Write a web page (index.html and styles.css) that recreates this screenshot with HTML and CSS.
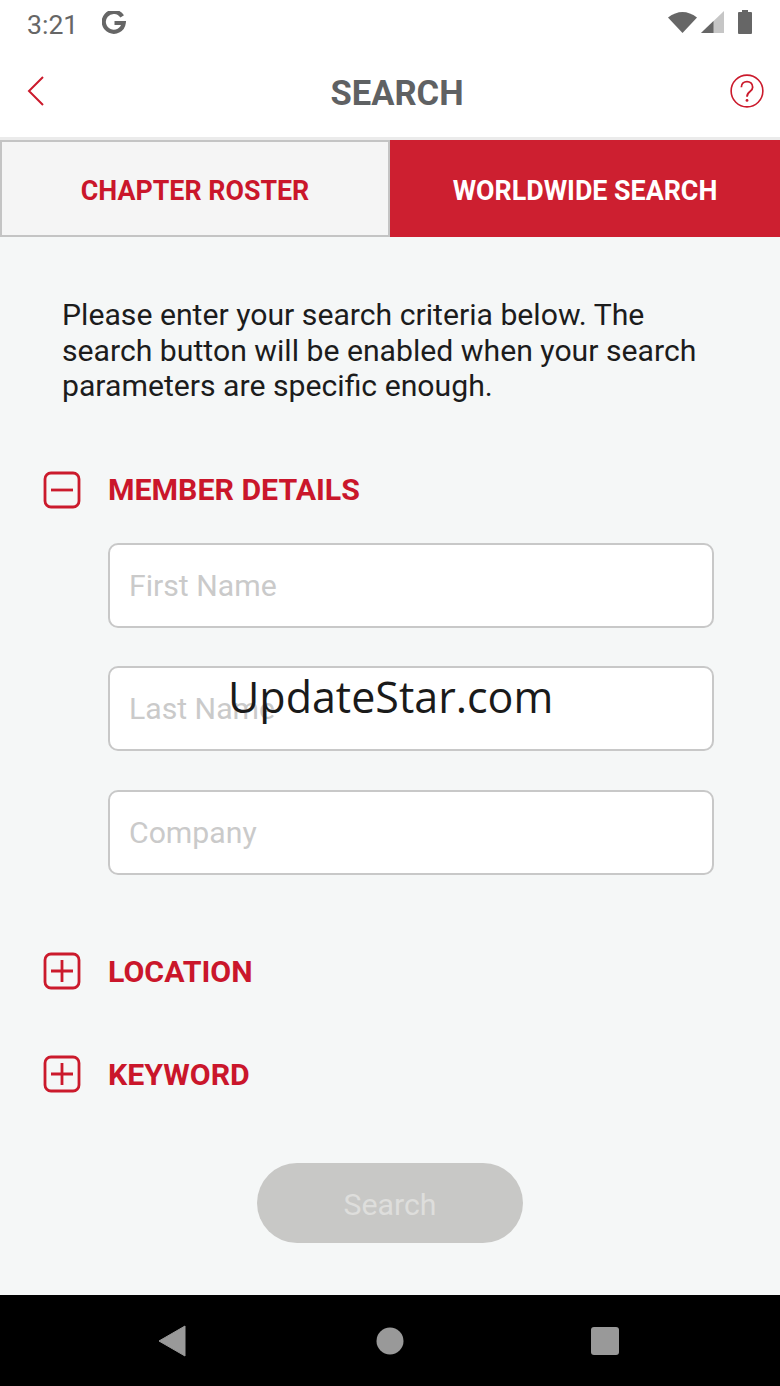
FILE: index.html
```html
<!DOCTYPE html>
<html lang="en">
<head>
    <meta charset="UTF-8">
    <meta name="viewport" content="width=device-width, initial-scale=1.0">
    <title>Search</title>
    <link rel="stylesheet" href="styles.css">
</head>
<body>
    <div class="screen">
        <div class="status-bar">
            <span class="clock">3:21</span>
            <!-- google logo -->
            <svg class="g-mark" width="24" height="24" viewBox="0 0 24 24"><path d="M20.2 5.4 A10 10 0 1 0 21.7 12 H12.5" fill="none" stroke="#666" stroke-width="4.2"/></svg>
            <div class="status-icons">
                <svg width="29" height="22" viewBox="0 0 29 22"><path d="M0 6.5 Q14.5 -4.5 29 6.5 L14.5 22 Z" fill="#666"/></svg>
                <svg class="signal" width="23" height="22" viewBox="0 0 23 22"><path d="M0 22 L23 0 V22 Z" fill="#c6c6c6"/><path d="M0 22 L12.5 10 V22 Z" fill="#666"/></svg>
                <svg width="14" height="24" viewBox="0 0 14 24"><path d="M4 0 H10 V2 H13 Q14 2 14 3 V23 Q14 24 13 24 H1 Q0 24 0 23 V3 Q0 2 1 2 H4 Z" fill="#666"/></svg>
            </div>
        </div>

        <header class="top-bar">
            <svg width="18" height="30" viewBox="0 0 18 30"><path d="M16 1 L2 15 L16 29" fill="none" stroke="#cb1a2c" stroke-width="2"/></svg>
            <h1>SEARCH</h1>
            <svg width="34" height="34" viewBox="0 0 36 36">
                <circle cx="18" cy="18" r="16.8" fill="none" stroke="#cb1a2c" stroke-width="1.7"/>
                <path d="M12 14 C12 6 24 6 24 14 C24 19 18 18 18 24" fill="none" stroke="#cb1a2c" stroke-width="1.9"/>
                <circle cx="18" cy="28" r="1.5" fill="#cb1a2c"/>
            </svg>
        </header>

        <div class="tabs">
            <div class="tab">CHAPTER ROSTER</div>
            <div class="tab active">WORLDWIDE SEARCH</div>
        </div>

        <main class="content">
            <p class="intro">Please enter your search criteria below. The search button will be enabled when your search parameters are specific enough.</p>

            <div class="section-head first">
                <svg width="38" height="38" viewBox="0 0 38 38"><rect x="2" y="2" width="34" height="34" rx="6" fill="none" stroke="#cb1a2c" stroke-width="2.8"/><path d="M8 19 H30" stroke="#cb1a2c" stroke-width="2.8"/></svg>
                <span>MEMBER DETAILS</span>
            </div>
            <div class="fields">
                <div class="field">First Name</div>
                <div class="field">Last Name</div>
                <div class="field">Company</div>
            </div>

            <div class="section-head location">
                <svg width="38" height="38" viewBox="0 0 38 38"><rect x="2" y="2" width="34" height="34" rx="6" fill="none" stroke="#cb1a2c" stroke-width="2.8"/><path d="M8 19 H30 M19 8 V30" stroke="#cb1a2c" stroke-width="2.8"/></svg>
                <span>LOCATION</span>
            </div>
            <div class="section-head keyword">
                <svg width="38" height="38" viewBox="0 0 38 38"><rect x="2" y="2" width="34" height="34" rx="6" fill="none" stroke="#cb1a2c" stroke-width="2.8"/><path d="M8 19 H30 M19 8 V30" stroke="#cb1a2c" stroke-width="2.8"/></svg>
                <span>KEYWORD</span>
            </div>

            <div class="button-row">
                <div class="search-btn">Search</div>
            </div>
        </main>

        <nav class="nav-bar">
            <svg width="28" height="32" viewBox="0 0 28 32"><path d="M27 1 V31 L1 16 Z" fill="#999" stroke="#999" stroke-linejoin="round"/></svg>
            <svg class="home" width="28" height="28" viewBox="0 0 28 28"><circle cx="14" cy="14" r="13.5" fill="#999"/></svg>
            <svg width="30" height="30" viewBox="0 0 30 30"><rect x="1" y="1" width="28" height="28" rx="3" fill="#999"/></svg>
        </nav>

        <div class="watermark">UpdateStar.com</div>
    </div>
</body>
</html>
```

FILE: styles.css
```css
body {
    margin: 0;
    font-family: Roboto, "Liberation Sans", sans-serif;
    background-color: #f5f7f7;
}
.screen {
    position: relative;
    width: 780px;
    height: 1386px;
    display: flex;
    flex-direction: column;
    overflow: hidden;
    background-color: #f5f7f7;
}
.status-bar {
    height: 48px;
    flex: none;
    box-sizing: border-box;
    background: #fff;
    display: flex;
    align-items: center;
    padding: 0 28px 0 27px;
    color: #666;
}
.clock {
    font-size: 26.6px;
}
.g-mark {
    margin: 0 0 2px 24px;
}
.status-icons {
    margin: 0 0 4px auto;
    display: flex;
    align-items: center;
    gap: 14px;
}
.signal {
    margin-left: -10px;
}
.top-bar {
    height: 89px;
    flex: none;
    box-sizing: border-box;
    background: #fff;
    display: flex;
    align-items: center;
    justify-content: space-between;
    padding: 0 16px 4px 27px;
}
.top-bar h1 {
    margin: 4px 0 0 19px;
    font-size: 34.6px;
    font-weight: 700;
    color: #5f6163;
}
.tabs {
    flex: none;
    height: 100px;
    box-sizing: border-box;
    border-top: 3px solid #ebebeb;
    display: flex;
}
.tab {
    width: 390px;
    box-sizing: border-box;
    display: flex;
    align-items: center;
    justify-content: center;
    padding-top: 4px;
    font-size: 26.8px;
    font-weight: 700;
    color: #ca162b;
    background: #f5f5f5;
    border: 2px solid #c4c4c4;
}
.tab.active {
    color: #fff;
    background: #cd1f30;
    border: none;
}
.content {
    flex: 1;
}
.intro {
    margin: 60px 70px 0 62px;
    font-size: 30.2px;
    line-height: 35.5px;
    color: #1c1c1c;
}
.section-head {
    display: flex;
    align-items: center;
    padding-left: 43px;
    gap: 27px;
    font-size: 30.3px;
    font-weight: 700;
    color: #ca162b;
}
.section-head.first {
    margin-top: 67px;
}
.section-head.location {
    margin-top: 77.8px;
}
.section-head.keyword {
    margin-top: 65px;
}
.fields {
    margin: 34.2px 66px 0 108px;
    display: flex;
    flex-direction: column;
    gap: 38.5px;
}
.field {
    height: 85px;
    box-sizing: border-box;
    display: flex;
    align-items: center;
    padding-left: 19px;
    font-size: 30.2px;
    color: #cacaca;
    background: #fff;
    border: 2px solid #c8c8c8;
    border-radius: 10px;
}
.button-row {
    margin-top: 70px;
    display: flex;
    justify-content: center;
}
.search-btn {
    width: 266px;
    height: 80px;
    box-sizing: border-box;
    padding-top: 3px;
    border-radius: 40px;
    display: flex;
    align-items: center;
    justify-content: center;
    font-size: 30.3px;
    color: #dededc;
    background: #c8c8c6;
}
.nav-bar {
    flex: none;
    height: 91px;
    background: #000;
    display: flex;
    align-items: center;
    justify-content: space-between;
    padding: 0 160px 0 158px;
}
.home {
    margin-left: 4px;
}
.watermark {
    position: absolute;
    left: 228px;
    top: 667px;
    font-family: "Open Sans", sans-serif;
    font-size: 43px;
    color: #1a1a1a;
}
```
